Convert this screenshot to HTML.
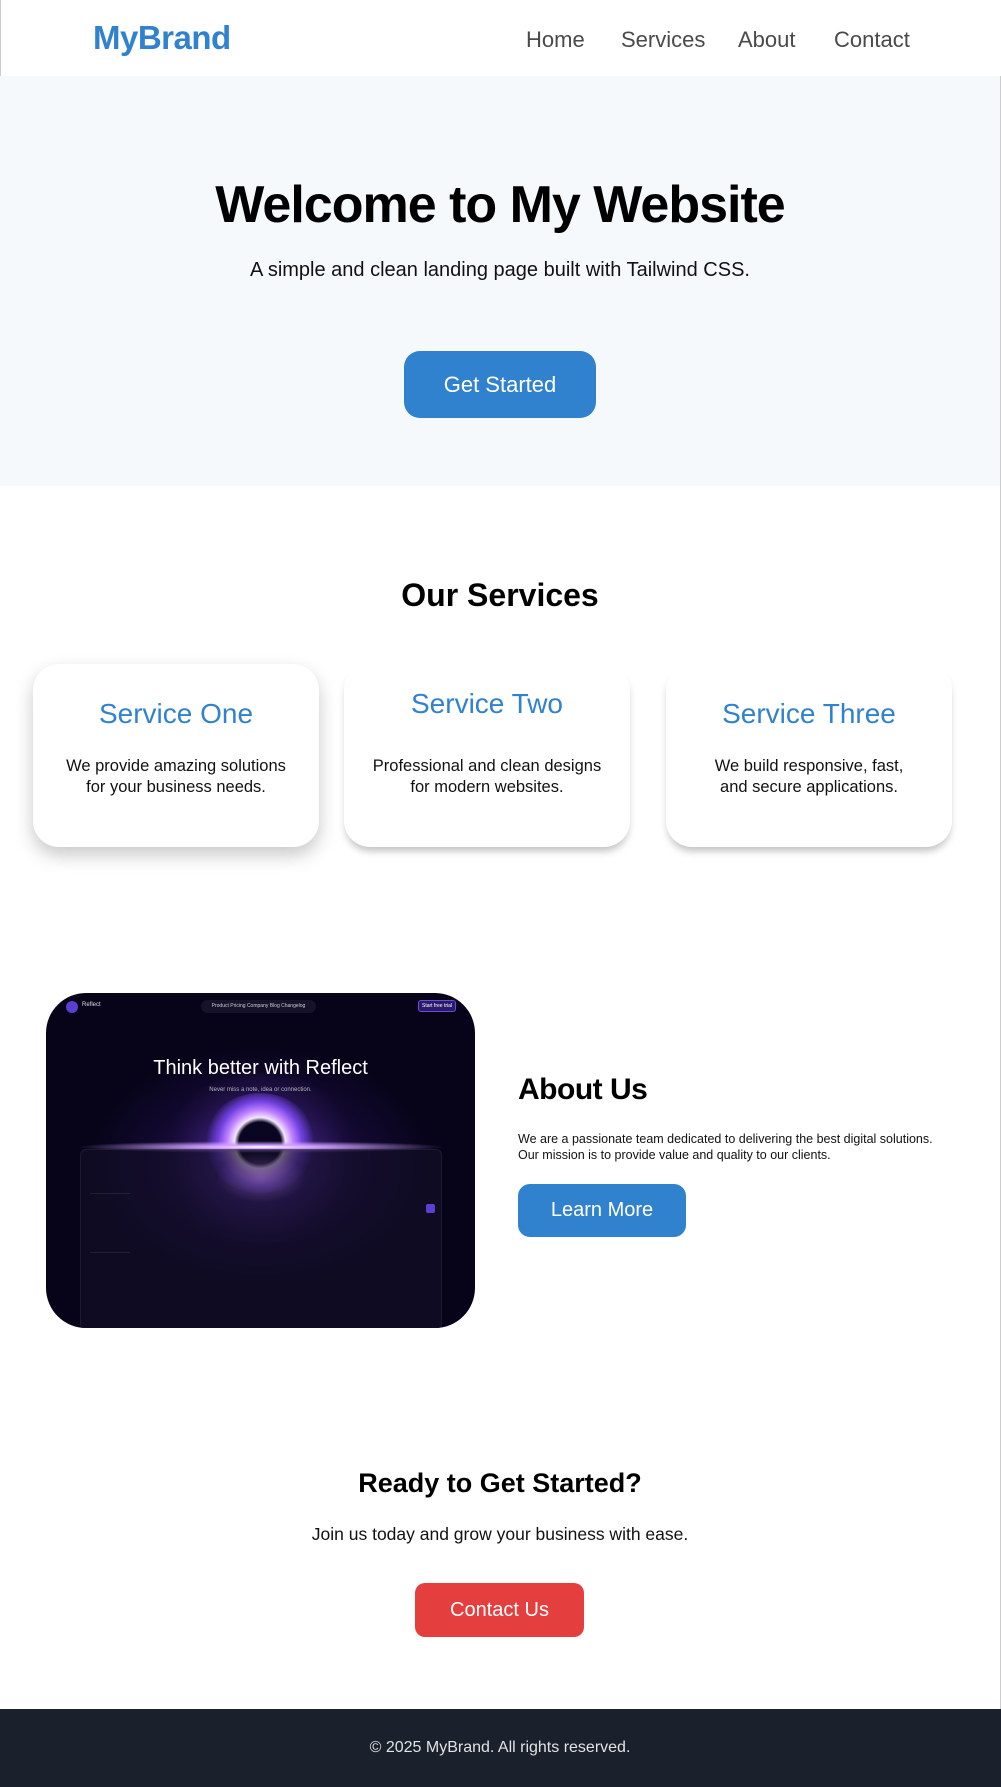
<!DOCTYPE html>
<html><head><meta charset="utf-8"><style>
*{margin:0;padding:0;box-sizing:border-box}
body{width:1001px;height:1787px;font-family:"Liberation Sans",sans-serif;background:#fff;position:relative;overflow:hidden;color:#000}
.a{position:absolute}
.c{position:absolute;left:0;width:1000px;text-align:center}
nav{position:absolute;left:0;top:0;width:1000px;height:76px;background:#fff;border-left:1px solid #ccc}
.logo{left:92px;top:19px;font-size:33px;font-weight:bold;color:#3182ce;letter-spacing:-0.5px}
.nl{top:27px;font-size:22px;color:#4a4a4a}
.hero{position:absolute;left:0;top:76px;width:1000px;height:410px;background:#f6f9fc}
.btn{position:absolute;color:#fff;text-align:center}
.card{position:absolute;top:664px;width:286px;height:183px;background:#fff;border-radius:26px;box-shadow:0 6px 8px -2px rgba(0,0,0,.25);text-align:center}
.card h3{font-weight:normal;color:#3182ce;font-size:28px;position:absolute;width:100%;top:34px}
.card p{position:absolute;width:100%;top:92px;font-size:16.5px;line-height:21px;color:#111}
.img{left:46px;top:993px;width:429px;height:335px;border-radius:40px;overflow:hidden;background:radial-gradient(ellipse 170px 120px at 50% 52%,#3a1c7a 0%,#150a35 55%,#07041a 100%)}
</style></head><body>
<nav>
<div class="a logo">MyBrand</div>
<div class="a nl" style="left:525px">Home</div>
<div class="a nl" style="left:620px">Services</div>
<div class="a nl" style="left:737px">About</div>
<div class="a nl" style="left:833px">Contact</div>
</nav>
<div style="position:absolute;right:0;top:76px;width:1px;height:1633px;background:#ccc"></div>
<div class="hero"></div>
<div class="c" style="top:175px;font-size:52px;font-weight:bold;letter-spacing:-1px">Welcome to My Website</div>
<div class="c" style="top:259px;font-size:20px;color:#111">A simple and clean landing page built with Tailwind CSS.</div>
<div class="btn" style="left:404px;top:351px;width:192px;height:67px;line-height:67px;border-radius:16px;background:#3182ce;font-size:22px">Get Started</div>

<div class="c" style="top:577px;font-size:32px;font-weight:bold">Our Services</div>
<div class="card" style="left:33px;box-shadow:0 8px 18px rgba(0,0,0,.22)"><h3>Service One</h3><p>We provide amazing solutions<br>for your business needs.</p></div>
<div class="card" style="left:344px"><h3 style="top:24px">Service Two</h3><p>Professional and clean designs<br>for modern websites.</p></div>
<div class="card" style="left:666px"><h3>Service Three</h3><p>We build responsive, fast,<br>and secure applications.</p></div>

<div class="a img">
 <div class="a" style="left:20px;top:8px;width:12px;height:12px;border-radius:50%;background:#5b3fd0"></div>
 <div class="a" style="left:36px;top:9px;font-size:6px;color:#ddd">Reflect</div>
 <div class="a" style="left:155px;top:7px;width:115px;height:13px;border-radius:7px;background:#15122a;font-size:5px;color:#ccc;line-height:13px;text-align:center">Product Pricing Company Blog Changelog</div>
 <div class="a" style="left:372px;top:7px;width:38px;height:12px;border:1px solid #6b4be0;border-radius:3px;background:#2a1a6a;font-size:5px;color:#fff;text-align:center;line-height:10px">Start free trial</div>
 <div class="a" style="left:0;top:64px;width:100%;text-align:center;font-size:20px;color:#fff">Think better with Reflect</div>
 <div class="a" style="left:0;top:94px;width:100%;text-align:center;font-size:6px;color:#bbb">Never miss a note, idea or connection.</div>
 <div class="a" style="left:110px;top:80px;width:210px;height:170px;border-radius:50%;background:radial-gradient(circle,rgba(140,80,255,.35) 0%,rgba(80,30,180,0) 70%)"></div>
 <div class="a" style="left:158px;top:100px;width:112px;height:100px;border-radius:50%;background:radial-gradient(circle,#0a0520 28%,#f4e6ff 34%,#c080ff 44%,#7040e0 56%,rgba(60,20,140,0) 72%)"></div>
 <div class="a" style="left:30px;top:148px;width:370px;height:12px;border-radius:50%;background:radial-gradient(ellipse,#fff 0%,#d0a0ff 20%,rgba(90,40,200,0) 70%)"></div>
 <div class="a" style="left:34px;top:156px;width:362px;height:181px;border-radius:6px;background:rgba(20,16,40,.65);border:1px solid rgba(255,255,255,.06)"></div>
 <div class="a" style="left:170px;top:160px;width:90px;height:50px;border-radius:50%;background:radial-gradient(ellipse,rgba(200,140,255,.35) 0%,rgba(100,50,200,0) 70%)"></div>
 <div class="a" style="left:380px;top:211px;width:9px;height:9px;border-radius:2px;background:#5b3fd0"></div>
 <div class="a" style="left:44px;top:200px;width:40px;height:60px;border-top:1px solid rgba(255,255,255,.08);border-bottom:1px solid rgba(255,255,255,.08)"></div>
</div>
<div class="a" style="left:518px;top:1073px;font-size:30px;font-weight:bold;letter-spacing:-0.5px">About Us</div>
<div class="a" style="left:518px;top:1131px;font-size:12.5px;line-height:16px;color:#111">We are a passionate team dedicated to delivering the best digital solutions.<br>Our mission is to provide value and quality to our clients.</div>
<div class="btn" style="left:518px;top:1184px;width:168px;height:53px;line-height:53px;border-radius:12px;background:#3182ce;font-size:20px">Learn More</div>

<div class="c" style="top:1468px;font-size:27px;font-weight:bold">Ready to Get Started?</div>
<div class="c" style="top:1524px;font-size:17.5px;color:#111">Join us today and grow your business with ease.</div>
<div class="btn" style="left:415px;top:1583px;width:169px;height:54px;line-height:54px;border-radius:10px;background:#e53e3e;font-size:20px">Contact Us</div>

<div class="a" style="left:0;top:1709px;width:1001px;height:78px;background:#1a202c"></div>
<div class="c" style="top:1739px;font-size:16px;color:#e2e2e2">© 2025 MyBrand. All rights reserved.</div>
</body></html>
